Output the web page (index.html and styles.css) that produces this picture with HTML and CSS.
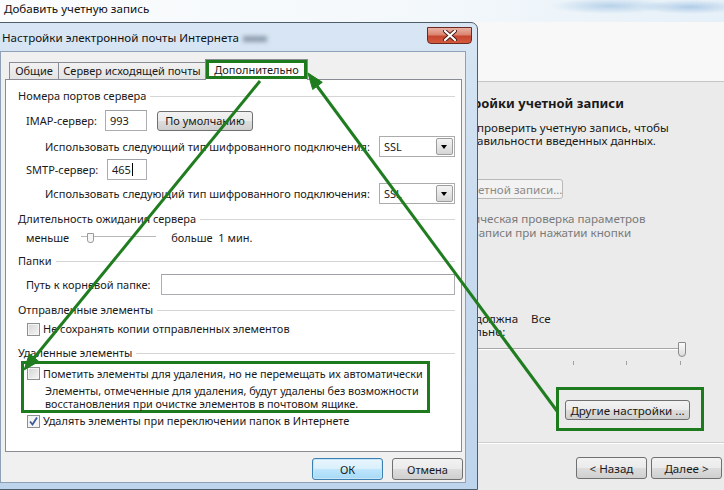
FILE: index.html
```html
<!DOCTYPE html>
<html lang="ru">
<head>
    <meta charset="UTF-8">
    <title>Настройки электронной почты Интернета</title>
    <link rel="stylesheet" href="styles.css">
</head>
<body>
<div class="desk">

    <!-- окно мастера "Добавить учетную запись" (позади) -->
    <div class="owner">
        <div class="owner-title">Добавить учетную запись</div>
        <div class="owner-head"></div>
        <div class="owner-body">
            <h3>ройки учетной записи</h3>
            <p class="txt">проверить учетную запись, чтобы<br>авильности введенных данных.</p>
            <div class="btn btn-off">етной записи...</div>
            <p class="txt dim">ическая проверка параметров<br>записи при нажатии кнопки</p>
            <p class="txt offline"><span>должна</span><span>Все</span><br>льно:</p>
            <div class="range">
                <div class="range-line"></div>
                <div class="range-thumb"></div>
                <div class="ticks"><i></i><i></i><i></i></div>
            </div>
            <div class="mark more">
                <div class="btn">Другие настройки ...</div>
            </div>
        </div>
        <div class="owner-foot">
            <div class="btn wide">&lt; Назад</div>
            <div class="btn wide">Далее &gt;</div>
        </div>
    </div>

    <!-- диалог настроек -->
    <div class="dialog">
        <div class="dlg-title">
            <span class="caption">Настройки электронной почты Интернета</span>
            <span class="smudge"></span>
            <span class="close">
                <svg width="14" height="11" viewBox="0 0 14 11">
                    <path d="M2 1 L12 10 M12 1 L2 10" stroke="#4a1a12" stroke-width="4" stroke-linecap="round"/>
                    <path d="M2 1 L12 10 M12 1 L2 10" stroke="#fff" stroke-width="2.2" stroke-linecap="round"/>
                </svg>
            </span>
        </div>
        <div class="client">
            <div class="tabs">
                <div class="tab t1">Общие</div>
                <div class="tab t2">Сервер исходящей почты</div>
                <div class="tab on">Дополнительно</div>
            </div>
            <div class="page">
                <div class="group">Номера портов сервера</div>
                <div class="row port">
                    <span class="lbl">IMAP-сервер:</span>
                    <span class="field num">993</span>
                    <div class="btn small">По умолчанию</div>
                </div>
                <div class="row enc">
                    <span>Использовать следующий тип шифрованного подключения:</span>
                    <span class="combo"><span>SSL</span><i class="drop"></i></span>
                </div>
                <div class="row port smtp">
                    <span class="lbl">SMTP-сервер:</span>
                    <span class="field num">465<b class="caret"></b></span>
                </div>
                <div class="row enc enc2">
                    <span>Использовать следующий тип шифрованного подключения:</span>
                    <span class="combo"><span>SSL</span><i class="drop"></i></span>
                </div>

                <div class="group">Длительность ожидания сервера</div>
                <div class="row timeout">
                    <span>меньше</span>
                    <span class="mini-range"><i class="mini-thumb"></i></span>
                    <span>больше&nbsp;&nbsp;1 мин.</span>
                </div>

                <div class="group">Папки</div>
                <div class="row path">
                    <span>Путь к корневой папке:</span>
                    <span class="field grow"></span>
                </div>

                <div class="group">Отправленные элементы</div>
                <div class="row check">
                    <span class="box"></span>
                    <span>Не сохранять копии отправленных элементов</span>
                </div>

                <div class="group deleted">Удаленные элементы</div>
                <div class="mark purge">
                    <div class="row check">
                        <span class="box"></span>
                        <span>Пометить элементы для удаления, но не перемещать их автоматически</span>
                    </div>
                    <p class="note">Элементы, отмеченные для удаления, будут удалены без возможности<br>восстановления при очистке элементов в почтовом ящике.</p>
                </div>
                <div class="row check last">
                    <span class="box checked">
                        <svg width="11" height="11" viewBox="0 0 11 11"><path d="M2 5.5 L4.5 8.5 L9 1.5" fill="none" stroke="#3d5a98" stroke-width="1.8"/></svg>
                    </span>
                    <span>Удалять элементы при переключении папок в Интернете</span>
                </div>
            </div>
            <div class="actions">
                <div class="btn wide default">ОК</div>
                <div class="btn wide">Отмена</div>
            </div>
        </div>
    </div>

    <!-- стрелки-указатели -->
    <svg class="arrows" width="724" height="490" viewBox="0 0 724 490">
        <g stroke="#1f7d1f" stroke-width="3" fill="#1f7d1f">
            <line x1="260" y1="81" x2="34" y2="358"/>
            <polygon points="24,370 38.8,361.4 29.4,353.8" stroke-width="1"/>
            <line x1="557" y1="411" x2="317" y2="86"/>
            <polygon points="308,73 322.3,82.3 312.7,89.5" stroke-width="1"/>
        </g>
    </svg>
</div>
</body>
</html>
```

FILE: styles.css
```css
body {
    margin: 0;
    font-family: "Noto Sans", "Open Sans", sans-serif;
    font-size: 11px;
    color: #1a1a1a;
}

.desk {
    position: relative;
    width: 724px;
    height: 490px;
    overflow: hidden;
    white-space: nowrap;
}

/* ---------- окно мастера ---------- */
.owner {
    display: flex;
    flex-direction: column;
    height: 490px;
    background: #ebebeb;
}
.owner-title {
    height: 22px;
    line-height: 17px;
    padding-left: 4px;
    font-size: 11.6px;
    color: #111;
    background:
        radial-gradient(ellipse 60px 8px at 610px 6px, rgba(120, 170, 215, 0.45), transparent),
        radial-gradient(ellipse 50px 7px at 690px 7px, rgba(110, 160, 210, 0.45), transparent),
        linear-gradient(90deg, #fbfcfd 0%, #f3f8fb 60%, #e6f0f8 100%);
}
.owner-head {
    height: 59px;
    background: #f8f8f8;
    border-bottom: 1px solid #c6c6c6;
}
.owner-body {
    flex: 1;
    padding-left: 473px;
    border-bottom: 1px solid #cfcfcf;
    box-shadow: 0 1px 0 #fff;
}
.owner-body h3 {
    margin: 13px 0 0;
    font-size: 13px;
    line-height: 16px;
    font-weight: bold;
}
.owner-body .txt {
    margin: 10px 0 0 4px;
    font-size: 11.6px;
    line-height: 13px;
}
.owner-body .btn-off {
    margin-top: 32px;
    width: 90px;
    color: #8a8a8a;
    border-color: #b9b9b9;
    background: #f2f2f2;
    justify-content: flex-start;
    padding-left: 4px;
    font-size: 11.6px;
}
.owner-body .dim {
    margin: 13px 0 0;
    line-height: 14px;
    color: #7a7a7a;
}
.owner-body .offline {
    margin: 72px 0 0 2px;
}
.offline span + span {
    margin-left: 13px;
}

.range {
    position: relative;
    height: 24px;
    width: 212px;
    margin-top: 4px;
}
.range-line {
    position: absolute;
    left: 0;
    right: 0;
    top: 6px;
    border-top: 1px solid #a6a6a6;
    border-bottom: 1px solid #fff;
}
.range-thumb {
    position: absolute;
    left: 205px;
    top: 0;
    width: 6px;
    height: 13px;
    border: 1px solid #8a8a8a;
    border-radius: 1px 1px 4px 4px;
    background: linear-gradient(#fafafa, #dcdcdc);
}
.ticks i {
    position: absolute;
    top: 19px;
    width: 1px;
    height: 4px;
    background: #a0a0a0;
}
.ticks i:nth-child(1) { left: 100px; }
.ticks i:nth-child(2) { left: 153px; }
.ticks i:nth-child(3) { left: 207px; }

.more {
    width: 132px;
    margin: 21px 0 0 83px;
    padding: 10px 4px 8px 6px;
}
.more .btn {
    width: 125px;
    font-size: 11.6px;
}

.owner-foot {
    height: 47px;
    display: flex;
    justify-content: flex-end;
    align-items: flex-start;
    gap: 4px;
    padding: 14px 2px 0 0;
    box-sizing: border-box;
}
.owner-foot .btn {
    font-size: 11.6px;
}

/* ---------- кнопки ---------- */
.btn {
    display: flex;
    align-items: center;
    justify-content: center;
    height: 20px;
    box-sizing: border-box;
    border: 1px solid #707070;
    border-radius: 3px;
    background: linear-gradient(#f2f2f2 0%, #ebebeb 48%, #dddddd 52%, #cfcfcf 100%);
}
.btn.wide {
    width: 71px;
    height: 22px;
}
.btn.default {
    border-color: #3c7fb1;
    background: linear-gradient(#eaf6fd 0%, #d9f0fc 48%, #bee6fd 52%, #a7d9f5 100%);
    box-shadow: inset 0 0 0 1px #c7e6f8;
}
.btn.small {
    width: 96px;
    margin-left: 10px;
}

/* ---------- диалог ---------- */
.dialog {
    position: absolute;
    left: -8px;
    top: 22px;
    width: 486px;
    height: 468px;
    box-sizing: border-box;
    padding: 0 11px 6px 7px;
    border: 1px solid #4f5c6b;
    border-radius: 7px 7px 0 0;
    background: linear-gradient(#d8e6f4 0%, #cadcef 40%, #bed4ec 100%);
    display: flex;
    flex-direction: column;
    z-index: 2;
}
.dlg-title {
    height: 29px;
    display: flex;
    align-items: flex-start;
    margin-right: -6px;
    padding-left: 2px;
}
.caption {
    margin-top: 7px;
    line-height: 16px;
    font-size: 11.6px;
    color: #111;
}
.smudge {
    width: 24px;
    height: 6px;
    margin: 13px 0 0 4px;
    background: #8f9eae;
    filter: blur(2px);
}
.close {
    margin: 4px 0 0 auto;
    width: 45px;
    height: 17px;
    box-sizing: border-box;
    border: 1px solid #6b2a20;
    border-radius: 0 0 4px 4px;
    background: linear-gradient(#eab2a6 0%, #db8570 45%, #c7462f 55%, #d25a3e 100%);
    display: flex;
    align-items: center;
    justify-content: center;
}

.client {
    flex: 1;
    background: #f0f0f0;
    border: 1px solid #8da0b6;
    padding: 7px 0 2px;
    display: flex;
    flex-direction: column;
}

.tabs {
    display: flex;
    align-items: flex-end;
    height: 20px;
    margin-left: 4px;
    padding-left: 4px;
}
.tab {
    height: 17px;
    line-height: 16px;
    box-sizing: border-box;
    text-align: center;
    border: 1px solid #898c95;
    border-bottom: none;
    background: linear-gradient(#f2f2f2, #e3e3e3);
}
.tab + .tab {
    margin-left: -1px;
}
.t1 { width: 50px; }
.t2 { width: 148px; }
.tab.on {
    position: relative;
    z-index: 1;
    width: 103px;
    height: 21px;
    margin-bottom: -1px;
    padding-top: 2px;
    background: #fff;
    outline: 3px solid #1d7a1d;
    outline-offset: -4px;
}

.page {
    height: 373px;
    box-sizing: border-box;
    margin: 0 3px 0 4px;
    padding: 8px 6px 0 12px;
    border: 1px solid #898c95;
    background: #fff;
}

.group {
    display: flex;
    align-items: center;
    line-height: 16px;
    margin-top: 7px;
}
.group::after {
    content: "";
    flex: 1;
    margin-left: 4px;
    border-top: 1px solid #d5d5d5;
}
.group:first-child {
    margin-top: 0;
}
.group.deleted {
    margin-top: 8px;
}

.row {
    display: flex;
    align-items: center;
    line-height: 16px;
}
.port {
    margin: 6px 0 0 8px;
}
.port .lbl {
    width: 79px;
}
.smtp {
    margin-top: 2px;
}
.smtp .lbl {
    width: 81px;
}
.enc {
    margin: 5px 0 0 27px;
}
.enc2 {
    margin-top: 3px;
}

.field {
    display: flex;
    align-items: center;
    height: 21px;
    box-sizing: border-box;
    padding: 0 4px;
    border: 1px solid #abadb3;
    border-top-color: #9ea1a8;
    background: #fff;
}
.field.num {
    width: 42px;
}
.smtp .field.num {
    width: 40px;
}
.caret {
    width: 1px;
    height: 13px;
    margin-left: 1px;
    background: #000;
}
.field.grow {
    flex: 1;
    margin-left: 10px;
}

.combo {
    display: flex;
    align-items: center;
    justify-content: space-between;
    width: 76px;
    height: 21px;
    box-sizing: border-box;
    margin-left: auto;
    padding-left: 4px;
    border: 1px solid #acacac;
    background: #fff;
}
.drop {
    position: relative;
    width: 17px;
    height: 17px;
    box-sizing: border-box;
    margin-right: 1px;
    border: 1px solid #9d9d9d;
    border-radius: 2px;
    background: linear-gradient(#f4f4f4, #d6d6d6);
}
.drop::after {
    content: "";
    position: absolute;
    left: 4px;
    top: 6px;
    border-left: 3.5px solid transparent;
    border-right: 3.5px solid transparent;
    border-top: 4px solid #000;
}

.timeout {
    margin: 3px 0 0 8px;
}
.mini-range {
    position: relative;
    width: 75px;
    height: 10px;
    margin: 0 15px 0 12px;
}
.mini-range::before {
    content: "";
    position: absolute;
    left: 0;
    right: 0;
    top: 3px;
    border-top: 1px solid #b8b8b8;
    border-bottom: 1px solid #fff;
}
.mini-thumb {
    position: absolute;
    left: 6px;
    top: 0;
    width: 5px;
    height: 8px;
    border: 1px solid #9a9a9a;
    border-radius: 0 0 3px 3px;
    background: #f6f6f6;
}

.path {
    margin: 5px 0 0 8px;
}

.check {
    margin: 3px 0 0 9px;
}
.box {
    flex-shrink: 0;
    width: 13px;
    height: 13px;
    box-sizing: border-box;
    margin-right: 3px;
    border: 1px solid #8e8f8f;
    background: linear-gradient(135deg, #d4d4d4, #f6f6f6);
    box-shadow: inset 0 0 0 1px #f4f4f4;
    display: flex;
    align-items: center;
    justify-content: center;
}
.box.checked {
    background: #f4f4f4;
}

/* зелёные рамки-выделения */
.mark {
    border: 3px solid #1d7a1d;
}
.purge {
    width: 409px;
    box-sizing: border-box;
    margin-left: 3px;
    padding-top: 2px;
    font-size: 10.8px;
}
.purge .check {
    margin: 0 0 0 3px;
    line-height: 15px;
}
.note {
    margin: 3px 0 0 21px;
    line-height: 13px;
}
.last {
    margin-top: 0;
}

.actions {
    display: flex;
    justify-content: flex-end;
    gap: 9px;
    margin-top: 6px;
    padding-right: 2px;
}

.arrows {
    position: absolute;
    left: 0;
    top: 0;
    z-index: 5;
}
```
